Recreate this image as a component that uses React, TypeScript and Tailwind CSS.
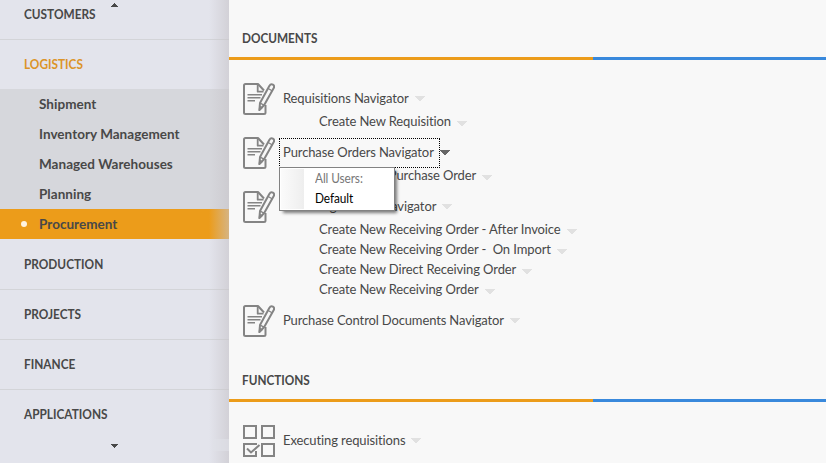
import React from "react";

const Caret = ({ dark = false, className = "mt-[-1px]" }: { dark?: boolean; className?: string }) => (
  <svg
    className={`ml-[6px] h-[5px] w-[10px] shrink-0 ${className} ${dark ? "text-[#666666]" : "text-[#e1e1e1]"}`}
    viewBox="0 0 10 5"
    shapeRendering="crispEdges"
  >
    <path d="M0 0H10V1H9V2H8V3H7V4H6V5H4V4H3V3H2V2H1V1H0Z" fill="currentColor" />
  </svg>
);

const DocIcon = () => (
  <svg className="h-8 w-8 shrink-0" viewBox="0 0 32 32" fill="none" stroke="#848484" strokeWidth="2" strokeLinejoin="round">
    <path d="M22.5 22V29.5Q22.5 31 21 31H2.5Q1 31 1 29.5V2.5Q1 1 2.5 1H15L21 7.5" />
    <path d="M14.7 1.5V8.7H20.5" strokeWidth="1.8" />
    <path d="M4.5 11.7H19M4.5 14.7H17.5M4.5 17.7H12" strokeWidth="1.6" />
    <path d="M26.3 3Q27.8 0.4 29.9 1.6Q32 2.9 30.6 5.3L21.2 22L16.4 27L17 20Z" fill="#f8f8f8" strokeWidth="2" />
    <path d="M25.2 5.5L29 7.7M17.2 20.2L21 22.2" strokeWidth="1.3" />
    <path d="M16.2 27.8L16.6 23.2L19.5 24.7Z" fill="#848484" strokeWidth="1" />
  </svg>
);

const TaskIcon = () => (
  <svg className="h-8 w-8 shrink-0" viewBox="0 0 32 32" fill="none" stroke="#848484" strokeWidth="2">
    <path d="M1 1H13V13H1ZM19 1H31V13H19ZM19 19H31V31H19Z" />
    <path d="M14 19H1V31H13V26" />
    <path d="M4 23.5L8 27.5L16.5 20" />
  </svg>
);

const Category = ({ label, className = "" }: { label: string; className?: string }) => (
  <div className={`flex h-[50px] shrink-0 items-center border-b border-[#d3d4d8] pl-6 pt-px text-[13px] font-bold ${className}`}>
    <span className="origin-left scale-x-[0.91]">{label}</span>
  </div>
);

const SubItem = ({ label, active = false }: { label: string; active?: boolean }) => (
  <div className={`flex h-[30px] items-center text-[13.5px] font-bold tracking-[0.03px] ${active ? "bg-[#ec9c1a]" : ""}`}>
    <span className="flex w-[39px] shrink-0 pl-[21px]">
      {active && <i className="h-[6px] w-[6px] rounded-full bg-[#fff3df]" />}
    </span>
    <span>{label}</span>
  </div>
);

const SectionHeader = ({ label }: { label: string }) => (
  <>
    <h2 className="flex h-[57px] items-end pb-[10px] pl-[13px] text-[13px] font-bold leading-[18px] tracking-normal">
      <span className="origin-left scale-x-[0.905]">{label}</span>
    </h2>
    <div className="flex h-[3px]">
      <div className="w-[364px] bg-[#ec9c1a]" />
      <div className="flex-1 bg-[#3989dc]" />
    </div>
  </>
);

const ChildLink = ({ label, className = "" }: { label: string; className?: string }) => (
  <div className={`flex h-5 items-center whitespace-pre pl-[90px] ${className}`}>
    <span>{label}</span>
    <Caret className="mt-[3px]" />
  </div>
);

export default function App() {
  return (
    <div className="flex h-[463px] w-[826px] overflow-hidden bg-[#f8f8f8] font-['Lato','Open_Sans',sans-serif] text-[#484848]">
      <aside className="relative flex w-[229px] shrink-0 flex-col overflow-hidden bg-[#e3e4ec]">
        <Category label="CUSTOMERS" className="-mt-[10px]" />
        <Category label="LOGISTICS" className="h-[49px]! border-none text-[#dc9428]" />
        <div className="bg-[#d6d7dc]">
          <SubItem label="Shipment" />
          <SubItem label="Inventory Management" />
          <SubItem label="Managed Warehouses" />
          <SubItem label="Planning" />
          <SubItem label="Procurement" active />
        </div>
        <Category label="PRODUCTION" className="h-[51px]! pt-[2px]!" />
        <Category label="PROJECTS" />
        <Category label="FINANCE" />
        <Category label="APPLICATIONS" className="border-none pt-0!" />
        <svg className="absolute left-[111px] top-[3px] h-1 w-[7px]" viewBox="0 0 7 4" shapeRendering="crispEdges">
          <path d="M0 4V3H1V2H2V1H3V0H4V1H5V2H6V3H7V4Z" fill="#484848" />
        </svg>
        <svg className="absolute left-[111px] top-[444px] h-1 w-[7px]" viewBox="0 0 7 4" shapeRendering="crispEdges">
          <path d="M0 0H7V1H6V2H5V3H4V4H3V3H2V2H1V1H0Z" fill="#484848" />
        </svg>
        <div className="absolute inset-y-0 right-0 w-5 bg-linear-to-r from-transparent to-[#c7c4c9]/60" />
        <div className="absolute right-0 top-[439px] h-3 w-4 bg-[#dfe1e7]/60" />
      </aside>

      <main className="min-w-0 flex-1 text-[13px] tracking-[-0.11px]">
        <SectionHeader label="DOCUMENTS" />
        <div className="pt-[23px]">
          <div className="flex h-8 items-center pl-[14px]">
            <DocIcon />
            <span className="ml-2">Requisitions Navigator</span>
            <Caret />
          </div>
          <ChildLink label="Create New Requisition" className="-mt-[3px]" />
          <div className="relative mt-[5px] flex h-8 items-center pl-[14px]">
            <DocIcon />
            <span className="ml-1 flex h-[30px] w-[161px] items-center border border-dotted border-black pl-[3px]">
              Purchase Orders Navigator
            </span>
            <div className="-ml-[6px]"><Caret dark /></div>
            <div className="absolute left-[50px] top-[30px] z-10 flex h-[44px] w-[116px] border border-[#828282] bg-white shadow-[3px_3px_3px_-1px_rgba(0,0,0,0.5)]">
              <div className="my-px ml-px w-[23px] bg-linear-to-r from-[#fbfbfb] to-[#eeeeee]" />
              <div className="flex flex-col items-start pl-[11px] leading-5">
                <span className="origin-left scale-x-[0.91] text-[#777777]">All Users:</span>
                <span className="origin-left scale-x-[0.91] text-black">Default</span>
              </div>
            </div>
          </div>
          <ChildLink label="Create New Purchase Order" className="-mt-[3px]" />
          <div className="mt-[5px] flex h-8 items-center pl-[14px]">
            <DocIcon />
            <span className="ml-2">Receiving Orders Navigator</span>
            <Caret />
          </div>
          <ChildLink label="Create New Receiving Order - After Invoice" className="-mt-[3px]" />
          <ChildLink label="Create New Receiving Order -  On Import" />
          <ChildLink label="Create New Direct Receiving Order" />
          <ChildLink label="Create New Receiving Order" />
          <div className="mt-[5px] flex h-8 items-center pl-[14px]">
            <DocIcon />
            <span className="ml-2 tracking-[-0.14px]">Purchase Control Documents Navigator</span>
            <Caret />
          </div>
        </div>
        <div className="mt-[5px]">
          <SectionHeader label="FUNCTIONS" />
        </div>
        <div className="mt-[23px] flex h-8 items-center pl-[14px]">
          <TaskIcon />
          <span className="ml-2">Executing requisitions</span>
          <Caret />
        </div>
      </main>
    </div>
  );
}
